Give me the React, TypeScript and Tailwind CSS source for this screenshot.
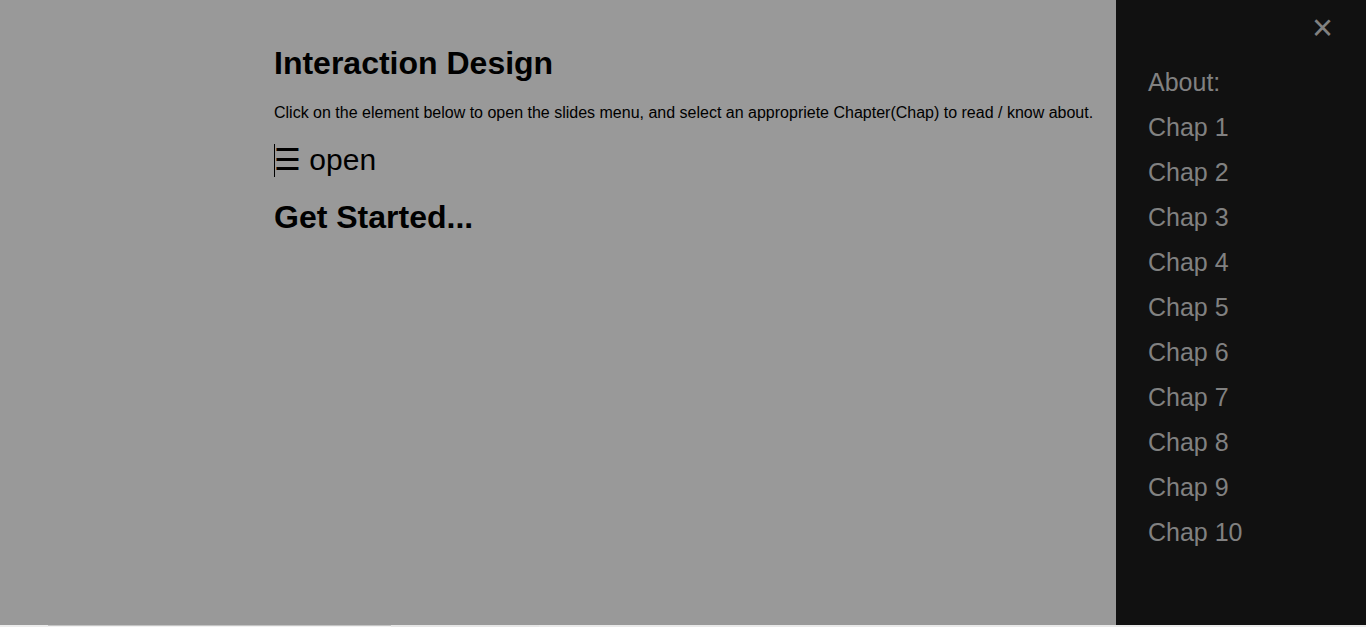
import React from "react";

const chaps = ["About:", "Chap 1", "Chap 2", "Chap 3", "Chap 4", "Chap 5", "Chap 6", "Chap 7", "Chap 8", "Chap 9", "Chap 10"];

export default function App() {
  return (
    <div className="w-[1366px] h-[627px] flex flex-col overflow-hidden" style={{ fontFamily: '"Liberation Sans", Arial, sans-serif' }}>
      <div className="flex flex-1 min-h-0">
        <main className="flex-1 bg-[#999999] pl-[274px] pt-[45px] text-black">
          <h2 className="text-[32px] font-bold leading-[37px]">Interaction Design</h2>
          <p className="text-[16px] leading-[18px] mt-[22px]">
            Click on the element below to open the slides menu, and select an appropriete Chapter(Chap) to read / know about.
          </p>
          <div className="mt-[21px] flex items-center h-[34px] text-[30px] leading-[34px]">
            <span className="w-px h-[33px] bg-black -mr-px"></span>
            <span className="cursor-pointer">☰ open</span>
          </div>
          <h2 className="text-[32px] font-bold leading-[37px] mt-[22px]">Get Started...</h2>
        </main>
        <aside className="w-[250px] bg-[#111111] relative pt-[60px]">
          <span className="absolute top-[6px] right-[33px] text-[36px] leading-[44px] text-[#818181]">×</span>
          <nav className="flex flex-col">
            {chaps.map((c) => (
              <a key={c} className="block pl-[32px] pr-[8px] py-[8px] text-[25px] leading-[29px] text-[#818181] no-underline">
                {c}
              </a>
            ))}
          </nav>
        </aside>
      </div>
      <div className="h-[2px] flex bg-[#ebebeb]">
        <div className="w-[48px] bg-[#ececec]"></div>
        <div className="w-[343px] border-t border-[#c4c4c4] bg-[#f2f2f2]"></div>
        <div className="w-[148px] bg-[#e6e6e6]"></div>
        <div className="flex-1 bg-[#e9e9e9]"></div>
      </div>
    </div>
  );
}
